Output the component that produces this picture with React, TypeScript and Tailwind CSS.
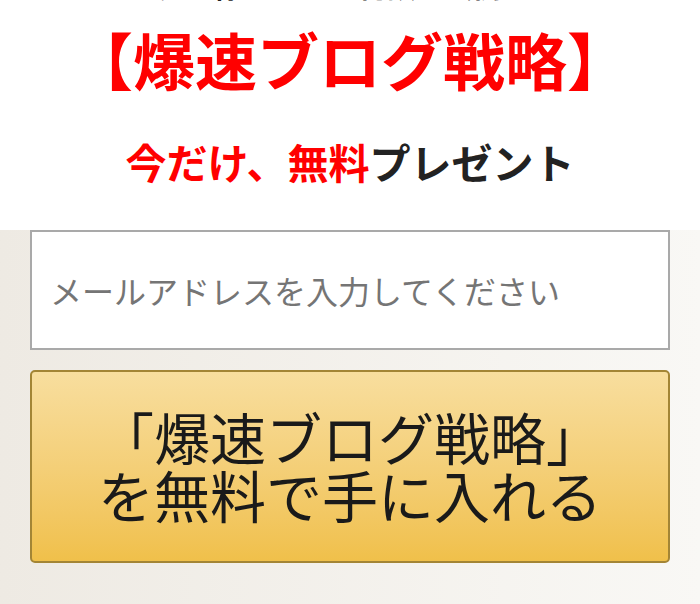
export default function App() {
  return (
    <div className="w-[700px] h-[604px] overflow-hidden font-['Noto_Sans_CJK_JP',sans-serif]">
      <section className="bg-white h-[230px] overflow-hidden flex flex-col items-center">
        {/* previous line, only its bottom edge is visible */}
        <p className="-mt-[30px] pr-[100px] text-[29px] leading-[30px] font-bold text-[#222] whitespace-nowrap">
          ブログで稼ぐための秘訣を公開
        </p>
        <h1 className="mt-[17px] text-[62px] leading-[84px] font-bold text-[#ff0000]">
          【爆速ブログ戦略】
        </h1>
        <p className="mt-[35px] text-[41px] leading-[50px] font-bold text-[#222]">
          <span className="text-[#ff0000]">今だけ、無料</span>プレゼント
        </p>
      </section>

      <section className="h-[374px] px-[30px] bg-linear-to-r from-[#eeeae3] to-[#f9f8f5] flex flex-col gap-[20px]">
        <input
          type="email"
          placeholder="メールアドレスを入力してください"
          className="h-[120px] w-full bg-white border-2 border-[#a9a9a9] px-[18px] text-[32px] text-[#333] placeholder:text-[#757575] outline-none"
        />
        <button className="h-[193px] w-full rounded-[5px] border-2 border-[#a38535] bg-linear-to-b from-[#f8de9e] to-[#f0c04a] text-[#1a1a1a] text-[56px] leading-[58px] flex flex-col items-center justify-center pb-[4px]">
          <span>「爆速ブログ戦略」</span>
          <span>を無料で手に入れる</span>
        </button>
      </section>
    </div>
  );
}
